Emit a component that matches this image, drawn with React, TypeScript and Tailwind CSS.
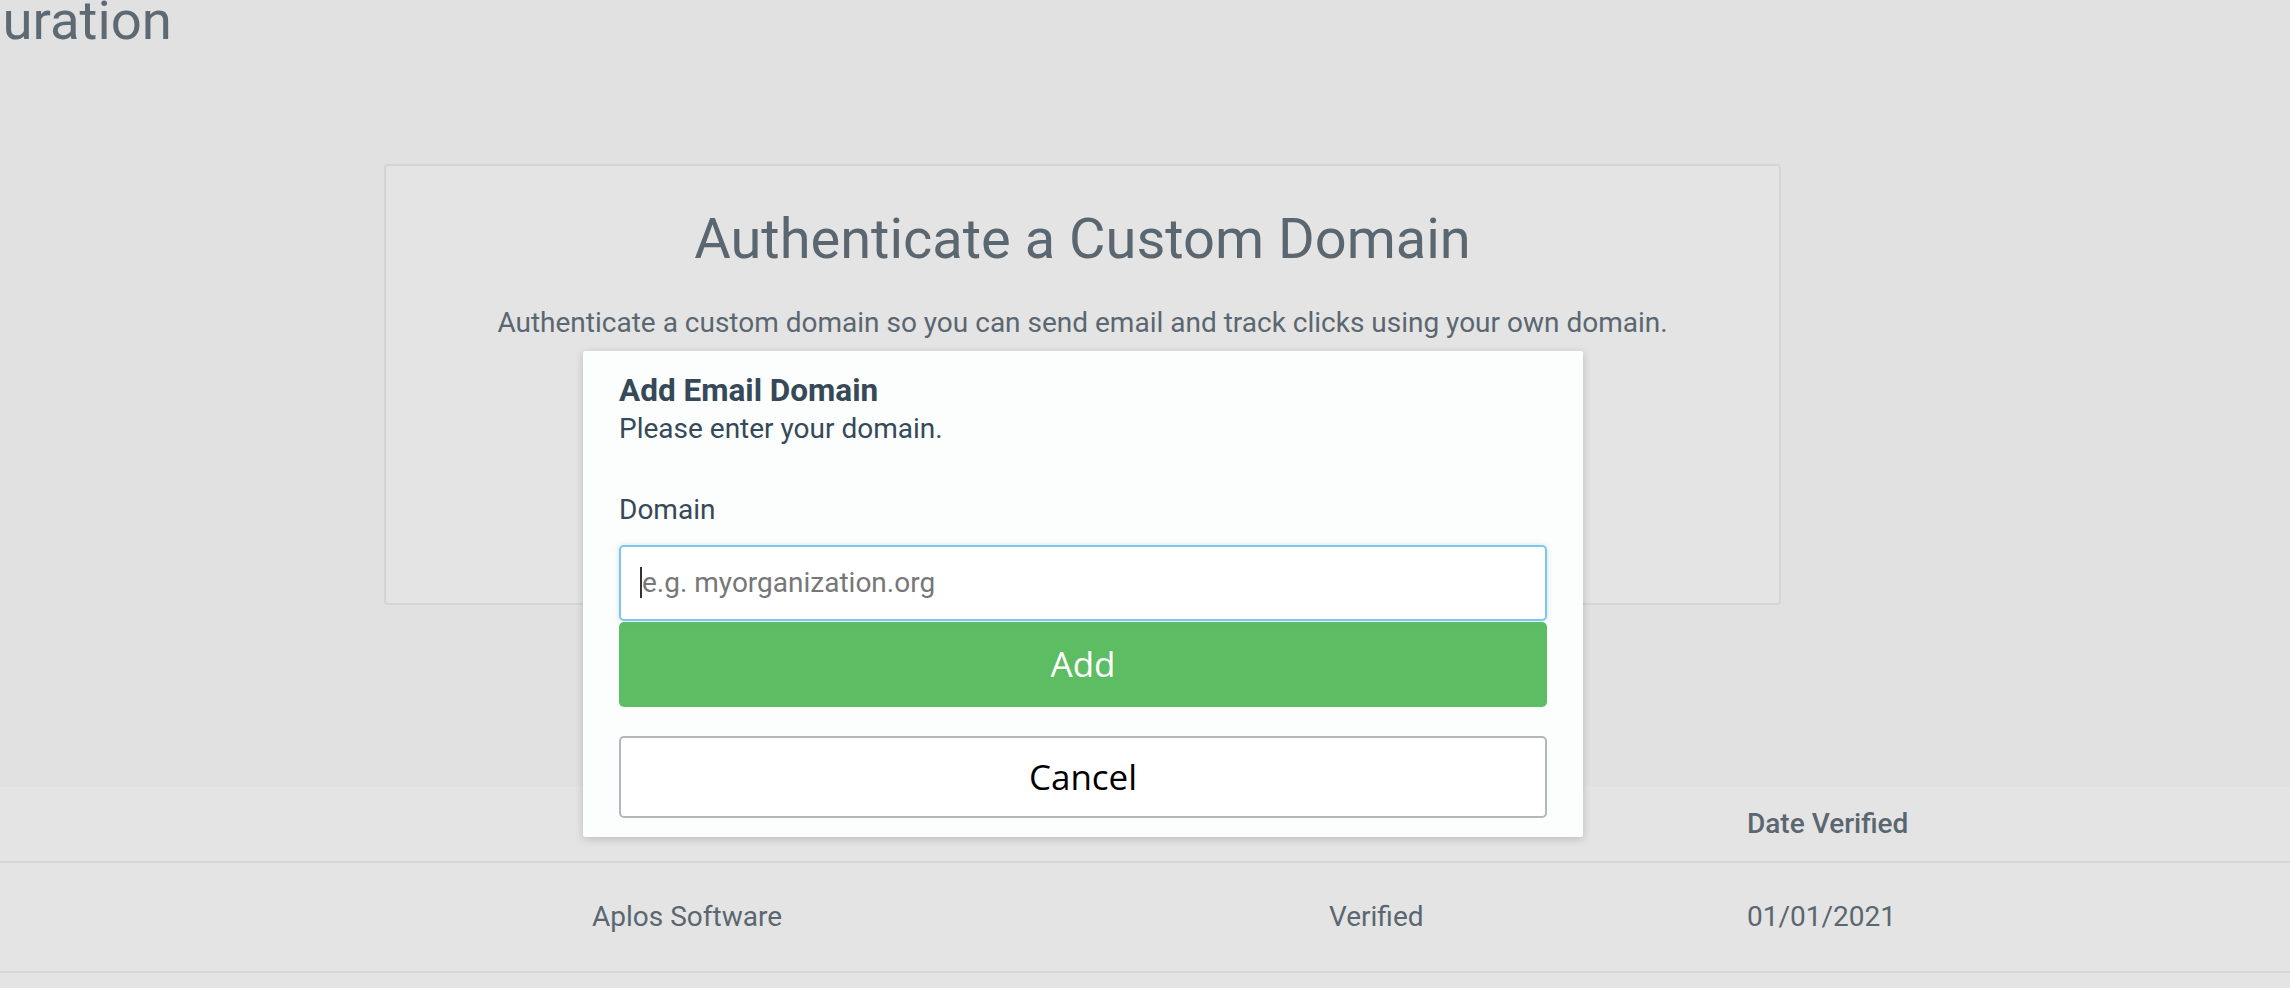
import React from 'react';

// Domain row shown in the table behind the modal
const rows = [{ name: 'Aplos Software', status: 'Verified', date: '01/01/2021' }];

const AddDomainModal: React.FC = () => {
  return (
    <div className="absolute left-[583px] top-[351px] w-[1000px] bg-[#fcfdfd] rounded-[2px] shadow-[0_2px_8px_rgba(0,0,0,0.18)] px-[36px] pt-[21px] pb-[19px] flex flex-col">
      <h4 className="text-[31.5px] leading-[38px] font-bold text-[#364958]">Add Email Domain</h4>
      <p className="text-[28px] leading-[38px] text-[#364958]">Please enter your domain.</p>

      <label className="mt-[43px] text-[28px] leading-[38px] text-[#364958]">Domain</label>
      <div className="relative mt-[16px]">
        <input
          type="text"
          placeholder="e.g. myorganization.org"
          className="w-full h-[76px] border-2 border-[#80c6e6] rounded-[5px] bg-white px-[21px] pb-[2px] text-[28px] text-[#333] placeholder:text-[#777] shadow-[0_0_5px_rgba(102,175,233,0.35)] outline-none"
        />
        {/* text caret */}
        <span className="absolute left-[21px] top-[22px] w-[2px] h-[31px] bg-[#333]" />
      </div>

      {/* Buttons */}
      <button className="mt-[1px] h-[85px] w-full rounded-[5px] bg-[#5cbd62] text-white text-[35px] font-['Open_Sans',sans-serif]">
        Add
      </button>
      <button className="mt-[29px] h-[82px] w-full rounded-[5px] border-2 border-[#b1b7bb] bg-white text-black text-[35px] font-['Open_Sans',sans-serif]">
        Cancel
      </button>
    </div>
  );
};

const App: React.FC = () => {
  return (
    <div className="relative w-full h-[988px] overflow-hidden bg-[#e1e1e1] font-['Roboto',sans-serif] flex flex-col">
      {/* Page heading, scrolled off to the left */}
      <h1 className="ml-[-155px] text-[54.5px] leading-[40px] text-[#5e6a73] whitespace-nowrap">Configuration</h1>

      {/* Authenticate card */}
      <div className="mt-[124px] ml-[384px] w-[1397px] h-[441px] border-2 border-[#d2d6d6] rounded-[4px] bg-[#e4e4e4] pt-[40px] flex flex-col items-center">
        <h2 className="text-[56px] leading-[66px] text-[#5b6770]">Authenticate a Custom Domain</h2>
        <p className="mt-[32px] text-[28px] leading-[38px] text-[#5b6770]">
          Authenticate a custom domain so you can send email and track clicks using your own domain.
        </p>
      </div>

      {/* Domains table */}
      <div className="mt-[182px] flex-1 bg-[#e4e4e4]">
        <div className="h-[74px] flex items-center pl-[592px] text-[28px] font-medium text-[#5b6770]">
          <div className="w-[737px]">Name</div>
          <div className="w-[418px]">Status</div>
          <div>Date Verified</div>
        </div>
        <div className="h-[2px] bg-[#d3d7d7]" />
        {rows.map((r) => (
          <div key={r.name}>
            <div className="h-[108px] flex items-center pl-[592px] text-[28px] text-[#5b6770]">
              <div className="w-[737px]">{r.name}</div>
              <div className="w-[418px]">{r.status}</div>
              <div>{r.date}</div>
            </div>
            <div className="h-[2px] bg-[#d3d7d7]" />
          </div>
        ))}
      </div>

      <AddDomainModal />
    </div>
  );
};

export default App;
